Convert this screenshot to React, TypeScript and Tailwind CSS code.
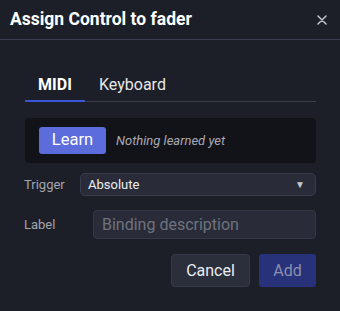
import React, { useState } from 'react'

const App = () => {
  const [tab, setTab] = useState<'midi' | 'keyboard'>('midi')

  return (
    <div className="w-[340px] h-[311px] bg-[#1c1f28] text-white overflow-hidden" style={{ fontFamily: 'Roboto, "Liberation Sans", sans-serif' }}>
      <div className="flex h-10 items-center justify-between pl-[10px] pr-[13px] border-b border-[#3b3e52]">
        <h1 className="text-[17.5px] font-bold leading-none">Assign Control to fader</h1>
        <button className="text-[#c4c6cf]">
          <svg width="10" height="10" viewBox="0 0 10 10" stroke="currentColor" strokeWidth="1.5" strokeLinecap="round">
            <path d="M1 1L9 9M9 1L1 9" />
          </svg>
        </button>
      </div>

      <div className="px-[24px] pt-[30px]">
        <div className="ml-px flex border-b border-[#3a3d4a]">
          <button
            onClick={() => setTab('midi')}
            className={`w-[60px] h-[32px] text-[16px] font-bold border-b-2 -mb-px ${tab === 'midi' ? 'border-[#3b55d6] text-white' : 'border-transparent'}`}
          >
            MIDI
          </button>
          <button
            onClick={() => setTab('keyboard')}
            className={`ml-[14px] h-[32px] text-[16px] text-[#e6e7ea] border-b-2 -mb-px ${tab === 'keyboard' ? 'border-[#3b55d6]' : 'border-transparent'}`}
          >
            Keyboard
          </button>
        </div>

        <div className="ml-px mt-[16px] h-[45px] rounded-[4px] bg-[#121319] flex items-center px-[14px] gap-[10px]">
          <button className="w-[67px] h-[27px] rounded-[3px] bg-[#5c6cdb] text-[16.5px]">Learn</button>
          <span className="italic text-[13px] text-[#a7a9b3]">Nothing learned yet</span>
        </div>

        <div className="mt-[10px] flex items-center">
          <span className="w-[56px] text-[13px] text-[#a3a5ae]">Trigger</span>
          <div className="flex-1 h-[23px] rounded-[5px] bg-[#292c38] border border-[#393c4b] flex items-center justify-between pl-[7px] pr-[10px]">
            <span className="text-[13px] text-[#eceef2]">Absolute</span>
            <span className="text-[10px] text-[#c4c6cf]">▼</span>
          </div>
        </div>

        <div className="mt-[14px] flex items-center">
          <span className="w-[69px] text-[13px] text-[#a3a5ae]">Label</span>
          <input
            placeholder="Binding description"
            className="flex-1 h-[29px] rounded-[4px] bg-[#292c38] border border-[#353847] px-[8px] text-[16px] text-white placeholder:text-[#6f727e] outline-none"
          />
        </div>

        <div className="mt-[15px] flex justify-end gap-[9px]">
          <button className="w-[79px] h-[33px] rounded-[4px] bg-[#2b2e3b] border border-[#363948] text-[16px] text-[#eceef2]">Cancel</button>
          <button disabled className="w-[57px] h-[33px] rounded-[3px] bg-[#27327a] text-[16px] text-[#8a90ad]">Add</button>
        </div>
      </div>
    </div>
  )
}

export default App
